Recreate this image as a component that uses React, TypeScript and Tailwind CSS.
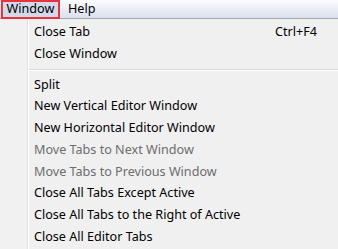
import React from "react";

type Item = { label: string; shortcut?: string; disabled?: boolean } | "sep";

const items: Item[] = [
  { label: "Close Tab", shortcut: "Ctrl+F4" },
  { label: "Close Window" },
  "sep",
  { label: "Split" },
  { label: "New Vertical Editor Window" },
  { label: "New Horizontal Editor Window" },
  { label: "Move Tabs to Next Window", disabled: true },
  { label: "Move Tabs to Previous Window", disabled: true },
  { label: "Close All Tabs Except Active" },
  { label: "Close All Tabs to the Right of Active" },
  { label: "Close All Editor Tabs" },
];

export default function App() {
  return (
    <div
      className="w-[338px] h-[249px] overflow-hidden bg-[#f0f0f0] text-[12.6px] text-black flex flex-col"
      style={{ fontFamily: '"Noto Sans", "Open Sans", sans-serif' }}
    >
      <div className="h-[19px] shrink-0 flex items-stretch bg-gradient-to-b from-[#fbfcfe] to-[#dae0ee] border-b border-[#a6a8ad]">
        <div className="ml-[1px] w-[59px] border-2 border-[#e8323c] bg-[#d3d9e8] flex items-center justify-center leading-none -mb-px">
          Window
        </div>
        <div className="ml-[7px] px-[1px] flex items-center leading-none">Help</div>
      </div>
      <div className="flex-1 flex">
        <div className="w-[28px] shrink-0 bg-[#f1f1f1] border-r border-[#e2e3e3]" />
        <div className="w-px bg-white" />
        <div className="flex-1 flex flex-col pt-[3px]">
          {items.map((it, i) =>
            it === "sep" ? (
              <div key={i} className="h-[9px] flex flex-col justify-center">
                <div className="h-px bg-[#d7d7d7]" />
                <div className="h-px bg-white" />
              </div>
            ) : (
              <div
                key={i}
                className={`h-[21.7px] flex items-center pl-[5px] pr-[21px] ${
                  it.disabled ? "text-[#6d6d6d]" : "text-black"
                }`}
              >
                <span className="flex-1">{it.label}</span>
                {it.shortcut && <span>{it.shortcut}</span>}
              </div>
            )
          )}
        </div>
      </div>
    </div>
  );
}
